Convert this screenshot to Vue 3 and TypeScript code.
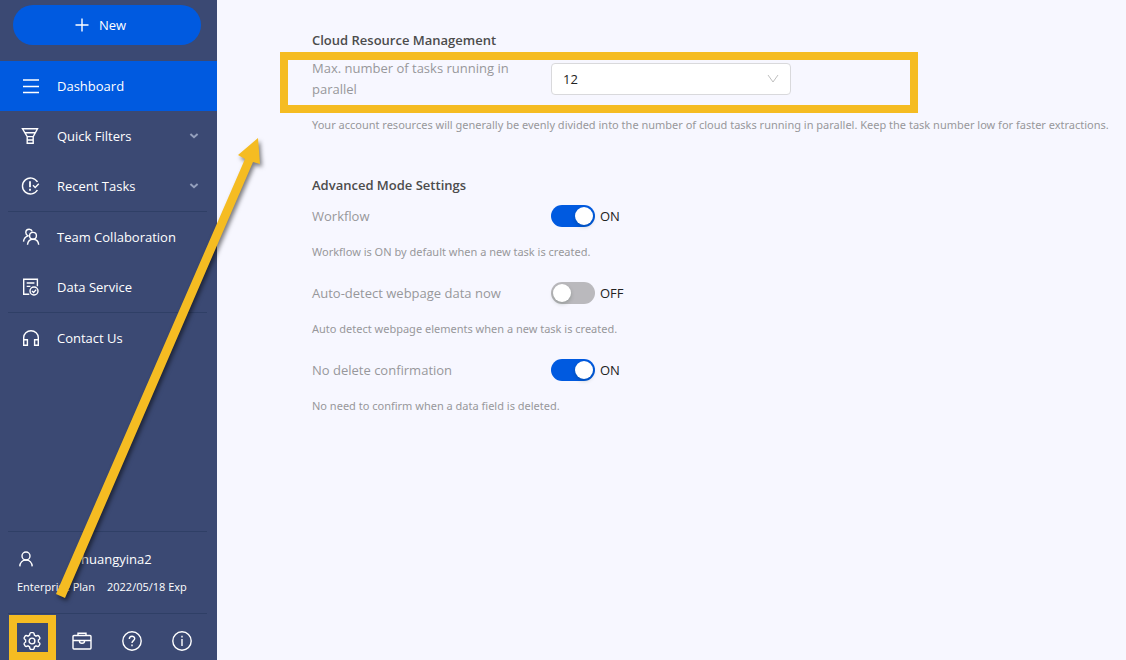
<script setup lang="ts">
import { ref } from 'vue'

interface Setting {
  id: string
  label: string
  hint: string
  on: boolean
}

const taskLimit = ref('12')
const limits = ['4', '6', '8', '10', '12']

const settings = ref<Setting[]>([
  { id: 'workflow', label: 'Workflow', hint: 'Workflow is ON by default when a new task is created.', on: true },
  { id: 'autodetect', label: 'Auto-detect webpage data now', hint: 'Auto detect webpage elements when a new task is created.', on: false },
  { id: 'nodelete', label: 'No delete confirmation', hint: 'No need to confirm when a data field is deleted.', on: true },
])
</script>

<template>
  <div class="app">
    <aside class="sidebar">
      <button type="button" class="new-btn">
        <svg width="14" height="14" viewBox="0 0 14 14"><path d="M7 0.5V13.5M0.5 7H13.5" /></svg>
        <span>New</span>
      </button>

      <nav class="menu">
        <a href="#" class="item active">
          <svg width="20" height="20" viewBox="0 0 20 20"><path d="M2 4H18M2 10.5H18M2 16.5H18" /></svg>
          <span>Dashboard</span>
        </a>
        <a href="#" class="item">
          <svg width="20" height="20" viewBox="0 0 20 20"><path d="M1.5 2.8H16.5L12.2 10.7V17.2H6.2V10.7ZM4 6.8H14.2M6.2 10.6H12.2M6.4 14H12" /></svg>
          <span>Quick Filters</span>
          <svg class="caret" width="10" height="8" viewBox="0 0 10 8"><path d="M1.4 2L5 5.2L8.6 2" /></svg>
        </a>
        <a href="#" class="item">
          <svg width="20" height="20" viewBox="0 0 20 20"><path d="M16.4 6A8 8 0 1 0 16.4 14M14 3.4L16.6 5.8" /><path d="M9 5.2V11.2M9 12.8V14.8" stroke-width="1.8" /><path d="M12 9.2L14.2 11.4L17.8 7.8" /></svg>
          <span>Recent Tasks</span>
          <svg class="caret" width="10" height="8" viewBox="0 0 10 8"><path d="M1.4 2L5 5.2L8.6 2" /></svg>
        </a>
        <a href="#" class="item ruled">
          <svg width="20" height="20" viewBox="0 0 20 20"><circle cx="12" cy="8.8" r="3.4" /><path d="M6.5 17.8C6.8 14.6 8.8 12.2 12 12.2C15.2 12.2 17.4 14.6 17.7 17.8" /><path d="M11.3 4.4C10.7 2.8 9.5 2.2 8.2 2.2C6.2 2.2 4.8 3.7 4.8 5.5C4.8 7 5.6 8.2 7 8.8C4.5 9.6 2.8 11.4 2.5 14.6" /></svg>
          <span>Team Collaboration</span>
        </a>
        <a href="#" class="item">
          <svg width="20" height="20" viewBox="0 0 20 20"><path d="M8.3 17.3H2.7V2.2H16.4V9.3M5.7 6H13.4M5.7 9.4H9.4" /><circle cx="13" cy="14" r="4" /><path d="M11 14L12.6 15.5L15.2 12.6" /></svg>
          <span>Data Service</span>
        </a>
        <a href="#" class="item ruled">
          <svg width="20" height="20" viewBox="0 0 20 20"><path d="M2.7 12V9.6A7.3 6.8 0 0 1 17.3 9.6V12" /><path d="M2.7 11.7H6.4V17.2H2.7ZM13.6 11.7H17.3V17.2H13.6Z" /></svg>
          <span>Contact Us</span>
        </a>
      </nav>

      <div class="account">
        <div class="user">
          <svg width="16" height="16" viewBox="0 0 16 16"><circle cx="8" cy="5" r="4" /><path d="M1.8 15.4C2 11.6 4.6 9 8 9C11.4 9 14 11.6 14.2 15.4" /></svg>
          <span>huangyina2</span>
        </div>
        <div class="plan"><span>Enterprise Plan</span><span>2022/05/18 Exp</span></div>
      </div>

      <div class="tools">
        <button type="button" aria-label="Settings" class="tool marked">
          <svg width="20" height="20" viewBox="0 0 20 20"><path d="M7.6 4.1Q7.8 1.6 9 1.6H11Q12.2 1.6 12.4 4.1L14 5.1Q16.2 4 16.9 5.1L17.9 6.8Q18.4 7.8 16.4 9V11Q18.4 12.2 17.9 13.2L16.9 14.9Q16.2 16 14 14.9L12.4 15.9Q12.2 18.4 11 18.4H9Q7.8 18.4 7.6 15.9L6 14.9Q3.8 16 3.1 14.9L2.1 13.2Q1.6 12.2 3.6 11V9Q1.6 7.8 2.1 6.8L3.1 5.1Q3.8 4 6 5.1Z" /><circle cx="10" cy="10" r="2.9" /></svg>
        </button>
        <button type="button" aria-label="Toolbox" class="tool">
          <svg width="20" height="20" viewBox="0 0 20 20"><rect x="1" y="4.5" width="18" height="13.5" rx="1" /><path d="M6 4.3V2.2H14V4.3M1 9.5H19M7.4 9.7A2.6 2.6 0 0 0 12.6 9.7" /></svg>
        </button>
        <button type="button" aria-label="Help" class="tool">
          <svg width="22" height="22" viewBox="0 0 22 22"><circle cx="11" cy="11" r="9.2" /><path d="M8.3 9C8.3 5.4 13.7 5.5 13.7 8.6C13.7 10.6 11 10.7 11 13" /><path d="M11 14.6V16.2" /></svg>
        </button>
        <button type="button" aria-label="About" class="tool">
          <svg width="22" height="22" viewBox="0 0 22 22"><circle cx="11" cy="11" r="9.2" /><path d="M11 5.8V7.4M11 9V16" /></svg>
        </button>
      </div>
    </aside>

    <main class="content">
      <section>
        <h2>Cloud Resource Management</h2>
        <div class="row limit">
          <label for="limit">Max. number of tasks running in parallel</label>
          <div class="select">
            <select id="limit" v-model="taskLimit">
              <option v-for="n in limits" :key="n">{{ n }}</option>
            </select>
            <svg width="12" height="10" viewBox="0 0 12 10"><path d="M1 1L6 8L11 1" /></svg>
          </div>
        </div>
        <p class="hint wide">Your account resources will generally be evenly divided into the number of cloud tasks running in parallel. Keep the task number low for faster extractions.</p>
      </section>

      <section class="advanced">
        <h2>Advanced Mode Settings</h2>
        <div v-for="s in settings" :key="s.id" class="setting">
          <div class="row">
            <label :for="s.id">{{ s.label }}</label>
            <div class="toggle">
              <input :id="s.id" v-model="s.on" type="checkbox" role="switch" />
              <span>{{ s.on ? 'ON' : 'OFF' }}</span>
            </div>
          </div>
          <p class="hint">{{ s.hint }}</p>
        </div>
      </section>
    </main>

    <svg class="arrow" width="300" height="660" viewBox="0 0 300 660">
      <path d="M56 594L245 159L238 155L258 138L260 164L253 162L65 598Z" />
    </svg>
  </div>
</template>

<style>
body {
  margin: 0;
}
</style>

<style scoped>
.app {
  position: relative;
  display: flex;
  min-height: 100vh;
  overflow: hidden;
  background: #f7f7ff;
  font-family: "Open Sans", "Noto Sans", sans-serif;
  font-size: 13px;
}

svg {
  fill: none;
  stroke: currentColor;
  stroke-width: 1.4;
  flex: none;
}

button {
  font: inherit;
  color: inherit;
  border: 0;
  padding: 0;
  background: none;
}

.sidebar {
  flex: 0 0 217px;
  display: flex;
  flex-direction: column;
  background: #3b4973;
  color: #fff;
}

.new-btn {
  display: flex;
  align-items: center;
  justify-content: center;
  gap: 10px;
  height: 40px;
  margin: 5px 16px 16px 13px;
  padding-right: 13px;
  border-radius: 20px;
  background: #005ae0;
}

.item {
  display: flex;
  align-items: center;
  gap: 16px;
  height: 50px;
  padding: 0 18px 0 21px;
  color: inherit;
  text-decoration: none;
}

.active {
  background: #005ae0;
}

.caret {
  margin-left: auto;
  color: #94a0bd;
  stroke-width: 2;
}

.ruled {
  background: linear-gradient(#2f3f66, #2f3f66) 8px 0 / 199px 1px no-repeat;
  padding-top: 1px;
}

.account {
  margin: auto 10px 0 8px;
  border: 1px solid #2f3f66;
  border-width: 1px 0;
  height: 81px;
}

.user {
  display: flex;
  align-items: center;
  gap: 47px;
  padding: 17px 0 0 10px;
  line-height: 20px;
}

.plan {
  display: flex;
  gap: 12px;
  padding: 9px 0 0 9px;
  font-size: 11px;
  line-height: 18px;
  white-space: nowrap;
}

.tools {
  display: flex;
  align-items: center;
  padding: 1px 0 0 9px;
  gap: 3px;
}

.tool {
  display: grid;
  place-items: center;
  box-sizing: border-box;
  width: 47px;
  height: 45px;
  padding: 7px 1px 0 0;
}

.marked {
  border: 8px solid #f5bc22;
}

.content {
  flex: 1;
  min-width: 0;
  padding: 30px 0 0 95px;
}

h2 {
  margin: 0;
  font-size: 13px;
  line-height: 20px;
  font-weight: 600;
  color: #4c4c4c;
}

.row {
  display: grid;
  grid-template-columns: 215px 1fr;
  column-gap: 24px;
  align-items: center;
  color: #97979b;
}

.limit {
  box-sizing: border-box;
  width: 638px;
  max-width: 100%;
  margin: 2px 0 0 -32px;
  padding: 0 24px;
  height: 61px;
  border: 8px solid #f5bc22;
  grid-template-rows: 38px;
}

.limit label {
  line-height: 21px;
}

.select {
  position: relative;
  width: 240px;
}

.select select {
  appearance: none;
  display: block;
  width: 100%;
  height: 32px;
  padding: 0 11px;
  border: 1px solid #d9d9dc;
  border-radius: 4px;
  background: #fff;
  color: #222;
  font: inherit;
}

.select svg {
  position: absolute;
  right: 12px;
  top: 11px;
  color: #bfbfbf;
  stroke-width: 1;
  pointer-events: none;
}

.hint {
  margin: 0;
  font-family: "Noto Sans", sans-serif;
  font-size: 11px;
  line-height: 20px;
  color: #97979b;
}

.wide {
  margin-top: 2px;
  white-space: nowrap;
}

.advanced {
  margin-top: 40px;
}

.setting {
  margin-bottom: 20px;
}

.setting .row {
  height: 22px;
  margin-top: 10px;
}

.setting .hint {
  margin-top: 15px;
}

.toggle {
  display: flex;
  align-items: center;
  gap: 5px;
  color: #222;
}

.toggle input {
  appearance: none;
  box-sizing: border-box;
  width: 44px;
  height: 22px;
  margin: 0;
  padding: 2px;
  border-radius: 11px;
  background: #bab9bd;
}

.toggle input::before {
  content: "";
  display: block;
  width: 18px;
  height: 18px;
  border-radius: 50%;
  background: #fff;
  box-shadow: 0 2px 4px rgba(0, 35, 11, 0.2);
}

.toggle input:checked {
  background: #005ae0;
}

.toggle input:checked::before {
  margin-left: auto;
}

.arrow {
  position: absolute;
  left: 0;
  top: 0;
  fill: #f5bc22;
  stroke: none;
  pointer-events: none;
  filter: drop-shadow(2px 3px 2px rgba(0, 0, 0, 0.5));
}
</style>
